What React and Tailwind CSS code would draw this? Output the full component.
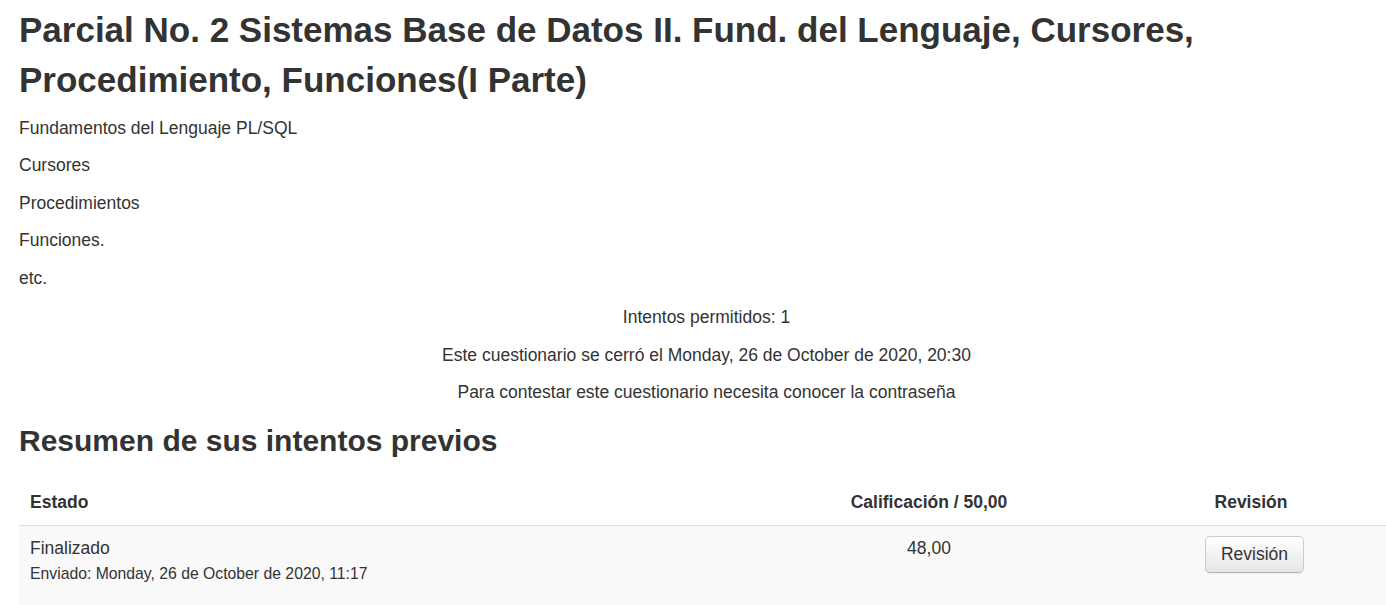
export default function App() {
  return (
    <div className="w-[1386px] h-[605px] overflow-hidden bg-white text-[#333]" style={{ fontFamily: '"Liberation Sans", Arial, sans-serif' }}>
      <div className="w-[1375px] ml-[19px] pt-[5px]">
        <h2 className="text-[35px] font-bold leading-[50px] m-0">
          Parcial No. 2 Sistemas Base de Datos II. Fund. del Lenguaje, Cursores, Procedimiento, Funciones(I Parte)
        </h2>
        <div className="mt-[10.5px] text-[17.5px] leading-[25px]">
          <p className="mb-[12.5px]">Fundamentos del Lenguaje PL/SQL</p>
          <p className="mb-[12.5px]">Cursores</p>
          <p className="mb-[12.5px]">Procedimientos</p>
          <p className="mb-[12.5px]">Funciones.</p>
          <p className="mb-[12.5px]">etc.</p>
        </div>
        <div className="pt-[2px] text-center text-[17.5px] leading-[25px]">
          <p className="mb-[12.5px]">Intentos permitidos: 1</p>
          <p className="mb-[12.5px]">Este cuestionario se cerró el Monday, 26 de October de 2020, 20:30</p>
          <p className="mb-[10.5px]">Para contestar este cuestionario necesita conocer la contraseña</p>
        </div>
        <h3 className="text-[30px] font-bold leading-[50px]">Resumen de sus intentos previos</h3>
        <table className="w-full mt-[14px] border-collapse text-[17.5px] leading-[25px]">
          <thead>
            <tr>
              <th className="w-[731px] text-left font-bold px-[11px] pt-[10px] pb-[10.5px] border-b border-[#ddd]">Estado</th>
              <th className="w-[358px] text-center font-bold px-[11px] pt-[10px] pb-[10.5px] border-b border-[#ddd]">Calificación / 50,00</th>
              <th className="text-center font-bold px-[11px] pt-[10px] pb-[10.5px] border-b border-[#ddd]">Revisión</th>
            </tr>
          </thead>
          <tbody>
            <tr className="bg-[#f9f9f9] align-top">
              <td className="px-[11px] pt-[10px] pb-[30px] text-left">
                <div>Finalizado</div>
                <div className="text-[15.75px]">Enviado: Monday, 26 de October de 2020, 11:17</div>
              </td>
              <td className="px-[11px] pt-[10px] text-center">48,00</td>
              <td className="pl-[18px] pr-[11px] pt-[10px] text-center">
                <button className="inline-block px-[15px] py-[5px] leading-[25px] text-[17.5px] text-[#333] rounded-[5px] border border-[#ccc] border-b-[#b3b3b3] bg-gradient-to-b from-white to-[#e6e6e6] shadow-[inset_0_1px_0_rgba(255,255,255,0.2),0_1px_2px_rgba(0,0,0,0.05)]">
                  Revisión
                </button>
              </td>
            </tr>
          </tbody>
        </table>
      </div>
    </div>
  );
}
